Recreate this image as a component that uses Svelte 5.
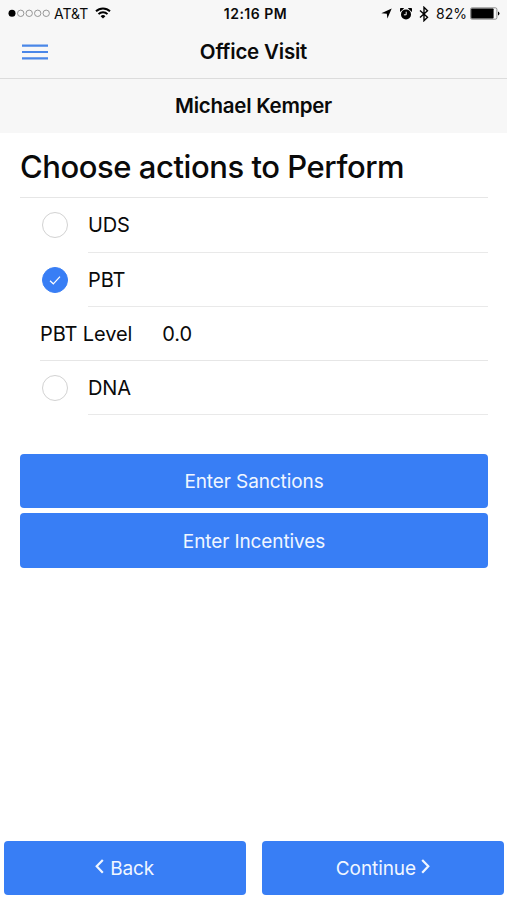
<script>
  let actions = $state([
    { id: 'uds', label: 'UDS', checked: false },
    { id: 'pbt', label: 'PBT', checked: true },
    { id: 'dna', label: 'DNA', checked: false }
  ]);
  let pbtLevel = $state('0.0');

  function toggle(action) {
    action.checked = !action.checked;
  }
</script>

<div class="screen">
  <header class="top">
    <div class="status-bar">
      <div class="status-left">
        <svg class="signal" width="42" height="10" viewBox="0 0 42 10">
          <circle cx="4" cy="4.3" r="3.5" fill="#000" />
          {#each [12.7, 21.2, 29.7, 38.2] as cx}
            <circle {cx} cy="4.3" r="3.2" fill="none" stroke="#8b8b8b" stroke-width="0.9" />
          {/each}
        </svg>
        <span class="carrier">AT&amp;T</span>
        <svg class="wifi" width="16" height="12" viewBox="0 0 16 12" fill="none" stroke="#000" stroke-width="1.9">
          <path d="M1 4.3a10 10 0 0 1 14 0" />
          <path d="M3.5 7.1a6.3 6.3 0 0 1 9 0" />
          <path d="M8 11.6 5.6 9.2a3.4 3.4 0 0 1 4.8 0z" fill="#000" stroke="none" />
        </svg>
      </div>
      <span class="time">12:16 PM</span>
      <div class="status-right">
        <svg width="11" height="11" viewBox="0 0 11 11">
          <path d="M10.7.4 6.4 10.6 5.8 5.8.3 5.3z" />
        </svg>
        <svg class="alarm" width="12" height="12" viewBox="0 0 12 12">
          <circle cx="6" cy="6.4" r="5" />
          <path d="M.1 3.9A2.5 2.5 0 0 1 4 .5zM11.9 3.9A2.5 2.5 0 0 0 8 .5z" />
          <path d="M6.2 3.7v3.1H3.9" fill="none" stroke="#f7f7f7" stroke-width="1" />
        </svg>
        <svg class="bluetooth" width="10" height="16" viewBox="0 0 10 16" fill="none" stroke="#000" stroke-width="1.4">
          <path d="M1 4.5 8.5 11.3 5 14.7V1.3l3.5 3.4L1 11.5" />
        </svg>
        <span class="percent">82%</span>
        <svg class="battery" width="30" height="13" viewBox="0 0 30 13">
          <rect x=".5" y=".8" width="26.4" height="11.4" rx="1.6" fill="none" stroke="#777" stroke-width=".8" />
          <rect x="1.2" y="1.5" width="22.4" height="10" rx=".8" />
          <path d="M28 4.5a2.1 2.1 0 0 1 0 4z" />
        </svg>
      </div>
    </div>

    <nav class="nav-bar">
      <button class="menu" aria-label="Menu">
        <svg width="26" height="17" viewBox="0 0 26 17">
          <path d="M0 1.6h26M0 8h26M0 14.4h26" stroke="#4a87e8" stroke-width="2.2" />
        </svg>
      </button>
      <h1>Office Visit</h1>
    </nav>
  </header>

  <div class="patient">Michael Kemper</div>

  <main>
    <h2>Choose actions to Perform</h2>

    <div class="list">
      {#each actions as action (action.id)}
        <button class="item" role="checkbox" aria-checked={action.checked} onclick={() => toggle(action)}>
          <span class="check" class:checked={action.checked}>
            {#if action.checked}
              <svg width="14" height="12" viewBox="0 0 14 12" fill="none" stroke="#fff" stroke-width="1.2">
                <path d="M2 6.7 5.3 9.8 12 2.6" />
              </svg>
            {/if}
          </span>
          <span class="label">{action.label}</span>
        </button>
        {#if action.id === 'pbt' && action.checked}
          <label class="level">
            <span>PBT Level</span>
            <input bind:value={pbtLevel} />
          </label>
        {/if}
      {/each}
    </div>

    <div class="buttons">
      <button class="primary">Enter Sanctions</button>
      <button class="primary">Enter Incentives</button>
    </div>
  </main>

  <footer>
    <button class="primary">
      <svg class="chevron left" width="9" height="15" viewBox="0 0 9 15"><path d="M7.8 1 1.7 7.3l6.1 6.4" /></svg>
      Back
    </button>
    <button class="primary">
      Continue
      <svg class="chevron right" width="9" height="15" viewBox="0 0 9 15"><path d="M1.2 1l6.1 6.3-6.1 6.4" /></svg>
    </button>
  </footer>
</div>

<style>
  :global(body) {
    margin: 0;
    background: #fff;
  }

  .screen {
    display: flex;
    flex-direction: column;
    height: 100vh;
    box-sizing: border-box;
    overflow: hidden;
    background: #fff;
    color: #0a0a0a;
    font-family: Inter, "Liberation Sans", sans-serif;
    font-size: 20px;
  }

  button,
  input {
    padding: 0;
    border: 0;
    background: none;
    color: inherit;
    font: inherit;
    letter-spacing: inherit;
  }

  button {
    cursor: pointer;
  }

  .top {
    height: 78px;
    background: #f7f7f7;
    border-bottom: 1px solid #dcdcdc;
  }

  .status-bar {
    display: grid;
    grid-template-columns: 1fr auto 1fr;
    align-items: center;
    height: 27px;
    padding: 0 7px 0 8px;
    font-size: 14px;
  }

  .status-left,
  .status-right {
    display: flex;
    align-items: center;
  }

  .status-right {
    justify-content: flex-end;
  }

  .carrier {
    margin-left: 4px;
  }

  .wifi {
    margin: -2px 0 0 7px;
  }

  .time {
    margin-left: 3px;
    font-weight: 600;
    letter-spacing: 0.5px;
  }

  .alarm {
    margin-left: 8px;
  }

  .bluetooth {
    margin-left: 7px;
  }

  .percent {
    margin-left: 7px;
  }

  .battery {
    margin-left: 3px;
  }

  .nav-bar {
    display: grid;
    grid-template-columns: 48px 1fr 48px;
    align-items: center;
    height: 50px;
  }

  .menu {
    display: flex;
    width: 26px;
    margin-left: 22px;
  }

  h1 {
    margin: 0;
    text-align: center;
    font-size: 20.5px;
    font-weight: 600;
    line-height: 24px;
    letter-spacing: -0.2px;
  }

  .patient {
    height: 54px;
    background: #f7f7f7;
    text-align: center;
    font-size: 20.5px;
    font-weight: 600;
    line-height: 54px;
    letter-spacing: -0.25px;
  }

  main {
    flex: 1;
    padding: 0 19px 0 20px;
  }

  h2 {
    height: 64px;
    margin: 0;
    border-bottom: 1px solid #e6e6e6;
    font-size: 31px;
    font-weight: 500;
    line-height: 68px;
    letter-spacing: -0.45px;
    white-space: nowrap;
  }

  .list {
    display: flex;
    flex-direction: column;
    padding-left: 20px;
    letter-spacing: -0.1px;
  }

  .item {
    display: flex;
    align-items: stretch;
    height: 54px;
    text-align: left;
  }

  .item:first-child {
    height: 54.6px;
  }

  .check {
    display: flex;
    align-items: center;
    justify-content: center;
    box-sizing: border-box;
    width: 26px;
    height: 26px;
    margin: 14px 20px 0 2px;
    border: 1.5px solid #d2d2d2;
    border-radius: 50%;
  }

  .check.checked {
    border-color: #387ef5;
    background: #387ef5;
  }

  .label {
    flex: 1;
    border-bottom: 1px solid #e9e9e9;
    line-height: 55px;
  }

  .level {
    display: flex;
    align-items: center;
    box-sizing: border-box;
    height: 54px;
    padding-top: 1px;
    border-bottom: 1px solid #e6e6e6;
  }

  .level input {
    width: 120px;
    margin-left: 30px;
    outline: none;
  }

  .buttons {
    display: flex;
    flex-direction: column;
    gap: 5px;
    margin-top: 39px;
  }

  .primary {
    display: flex;
    align-items: center;
    justify-content: center;
    height: 54.5px;
    padding-top: 2px;
    border-radius: 4px;
    background: #387ef5;
    color: #f0f6ff;
    font-size: 19px;
    letter-spacing: -0.1px;
  }

  footer {
    display: grid;
    grid-template-columns: 1fr 1fr;
    gap: 16px;
    padding: 0 3px 5px 3.5px;
  }

  .chevron {
    fill: none;
    stroke: #f0f6ff;
    stroke-width: 2.2;
    margin-top: -4px;
  }

  .chevron.left {
    margin-right: 6px;
  }

  .chevron.right {
    margin-left: 5px;
  }
</style>
